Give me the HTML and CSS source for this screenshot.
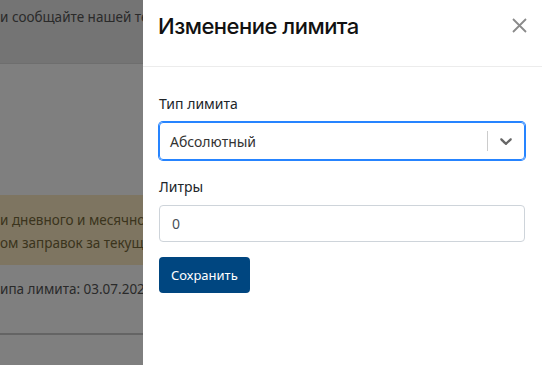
FILE: index.html
```html
<!DOCTYPE html>
<html lang="ru">
<head>
    <meta charset="UTF-8">
    <meta name="viewport" content="width=device-width, initial-scale=1.0">
    <link rel="stylesheet" href="styles.css">
    <title>Изменение лимита</title>
</head>
<body>

    <!-- Страница под панелью -->
    <div class="page">
        <div class="page-top">
            <p>и сообщайте нашей технической поддержке</p>
        </div>
        <div class="page-body">
            <div class="alert">
                <p>и дневного и месячного лимитов</p>
                <p>ом заправок за текущий период</p>
            </div>
            <p class="page-date">ипа лимита: 03.07.2023</p>
            <div class="page-line"></div>
        </div>
    </div>

    <div class="backdrop"></div>

    <!-- Боковая панель -->
    <aside class="drawer">
        <div class="drawer-header">
            <h2 class="drawer-title">Изменение лимита</h2>
            <button class="close-button" aria-label="Закрыть">
                <svg width="15" height="15" viewBox="0 0 15 15">
                    <path d="M1 1L14 14M14 1L1 14" stroke="#8a8a8a" stroke-width="1.8" fill="none"/>
                </svg>
            </button>
        </div>
        <div class="drawer-body">
            <div class="field">
                <label class="field-label">Тип лимита</label>
                <div class="select">
                    <div class="select-value">Абсолютный</div>
                    <span class="select-separator"></span>
                    <div class="select-indicator">
                        <svg width="20" height="20" viewBox="0 0 20 20">
                            <path fill="#666" d="M4.516 7.548c0.436-0.446 1.043-0.481 1.576 0l3.908 3.747 3.908-3.747c0.533-0.481 1.141-0.446 1.574 0 0.436 0.445 0.408 1.197 0 1.615-0.406 0.418-4.695 4.502-4.695 4.502-0.217 0.223-0.502 0.335-0.787 0.335s-0.57-0.112-0.789-0.335c0 0-4.287-4.084-4.695-4.502s-0.436-1.17 0-1.615z"/>
                        </svg>
                    </div>
                </div>
            </div>
            <div class="field">
                <label class="field-label" for="litres">Литры</label>
                <input id="litres" class="text-input" type="text" value="0">
            </div>
            <button class="save-button">Сохранить</button>
        </div>
    </aside>

</body>
</html>
```

FILE: styles.css
```css
body {
    margin: 0;
    font-family: "Noto Sans", "Open Sans", sans-serif;
    color: #212529;
    background: #fff;
    overflow: hidden;
}

p {
    margin: 0;
}

/* Страница под панелью */
.page {
    width: 143px;
    height: 365px;
    overflow: hidden;
    white-space: nowrap;
}

.page-top {
    height: 64px;
    background: #e8e8e8;
    border-bottom: 1px solid #dcdcdc;
    box-sizing: border-box;
    padding-top: 8px;
    font-size: 13.5px;
    color: #555;
}

.page-body {
    padding-top: 131px;
}

.alert {
    background: #fcebc2;
    color: #76683a;
    height: 70px;
    box-sizing: border-box;
    padding-top: 14px;
    font-size: 13.5px;
    line-height: 23px;
}

.page-date {
    margin-top: 15px;
    font-size: 13.5px;
    color: #555;
}

.page-line {
    margin-top: 35px;
    height: 2px;
    background: #c8c8c8;
}

.backdrop {
    position: fixed;
    inset: 0;
    background: rgba(0, 0, 0, 0.5);
}

/* Боковая панель */
.drawer {
    position: fixed;
    top: 0;
    right: 0;
    bottom: 0;
    width: 399px;
    background: #fff;
    display: flex;
    flex-direction: column;
}

.drawer-header {
    height: 67px;
    box-sizing: border-box;
    border-bottom: 1px solid #ececec;
    padding: 13px 15px 0 15px;
    display: flex;
    align-items: flex-start;
    justify-content: space-between;
}

.drawer-title {
    margin: 0;
    font-family: Inter, "Noto Sans", sans-serif;
    font-weight: 500;
    font-size: 22px;
    line-height: 27px;
    color: #111;
    letter-spacing: -0.5px;
}

.close-button {
    border: none;
    background: none;
    padding: 0;
    width: 15px;
    height: 15px;
    display: flex;
    margin-top: 5px;
}

.drawer-body {
    padding: 26px 17px 0 16px;
}

.field {
    margin-bottom: 16px;
}

.field-label {
    display: block;
    font-size: 14px;
    line-height: 21px;
    margin-bottom: 8px;
}

.select {
    height: 38px;
    box-sizing: border-box;
    border: 1px solid #2684ff;
    box-shadow: 0 0 0 1px #2684ff;
    border-radius: 4px;
    display: flex;
    align-items: center;
}

.select-value {
    flex: 1;
    padding-left: 10px;
    font-size: 14px;
    color: #333;
}

.select-separator {
    width: 1px;
    height: 20px;
    background: #ccc;
}

.select-indicator {
    padding: 0 8px;
    display: flex;
}

.text-input {
    display: block;
    width: 100%;
    height: 37px;
    box-sizing: border-box;
    border: 1px solid #ced4da;
    border-radius: 4px;
    padding: 0 12px;
    font-family: inherit;
    font-size: 14px;
    color: #495057;
}

.save-button {
    margin-top: -1px;
    height: 36px;
    padding: 0 12px;
    border: none;
    border-radius: 4px;
    background: #004680;
    color: #fff;
    font-family: inherit;
    font-size: 13px;
}
```
